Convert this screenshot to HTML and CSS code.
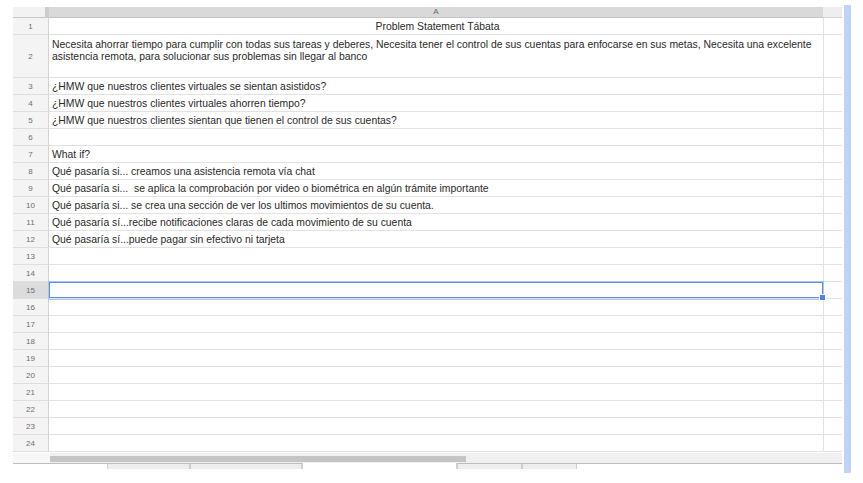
FILE: index.html
```html
<!DOCTYPE html>
<html>
<head>
<meta charset="utf-8">
<link rel="stylesheet" href="styles.css">
</head>
<body>
<div class="page">
  <div class="sheet">
    <div class="row head">
      <div class="corner"></div>
      <div class="colhead">A</div>
      <div class="colhead-rest"></div>
    </div>
    <div class="row"><div class="num">1</div><div class="cell center">Problem Statement Tábata</div><div class="rest"></div></div>
    <div class="row tall"><div class="num">2</div><div class="cell wrap">Necesita ahorrar tiempo para cumplir con todas sus tareas y deberes, Necesita tener el control de sus cuentas para enfocarse en sus metas, Necesita una excelente<br>asistencia remota, para solucionar sus problemas sin llegar al banco</div><div class="rest"></div></div>
    <div class="row"><div class="num">3</div><div class="cell">¿HMW que nuestros clientes virtuales se sientan asistidos?</div><div class="rest"></div></div>
    <div class="row"><div class="num">4</div><div class="cell">¿HMW que nuestros clientes virtuales ahorren tiempo?</div><div class="rest"></div></div>
    <div class="row"><div class="num">5</div><div class="cell">¿HMW que nuestros clientes sientan que tienen el control de sus cuentas?</div><div class="rest"></div></div>
    <div class="row"><div class="num">6</div><div class="cell"></div><div class="rest"></div></div>
    <div class="row"><div class="num">7</div><div class="cell">What if?</div><div class="rest"></div></div>
    <div class="row"><div class="num">8</div><div class="cell">Qué pasaría si... creamos una asistencia remota vía chat</div><div class="rest"></div></div>
    <div class="row"><div class="num">9</div><div class="cell">Qué pasaría si...&nbsp; se aplica la comprobación por video o biométrica en algún trámite importante</div><div class="rest"></div></div>
    <div class="row"><div class="num">10</div><div class="cell">Qué pasaría si... se crea una sección de ver los ultimos movimientos de su cuenta.</div><div class="rest"></div></div>
    <div class="row"><div class="num">11</div><div class="cell">Qué pasaría sí...recibe notificaciones claras de cada movimiento de su cuenta</div><div class="rest"></div></div>
    <div class="row"><div class="num">12</div><div class="cell">Qué pasaría sí...puede pagar sin efectivo ni tarjeta</div><div class="rest"></div></div>
    <div class="row"><div class="num">13</div><div class="cell"></div><div class="rest"></div></div>
    <div class="row"><div class="num">14</div><div class="cell"></div><div class="rest"></div></div>
    <div class="row sel"><div class="num">15</div><div class="cell"><span class="handle"></span></div><div class="rest"></div></div>
    <div class="row"><div class="num">16</div><div class="cell"></div><div class="rest"></div></div>
    <div class="row"><div class="num">17</div><div class="cell"></div><div class="rest"></div></div>
    <div class="row"><div class="num">18</div><div class="cell"></div><div class="rest"></div></div>
    <div class="row"><div class="num">19</div><div class="cell"></div><div class="rest"></div></div>
    <div class="row"><div class="num">20</div><div class="cell"></div><div class="rest"></div></div>
    <div class="row"><div class="num">21</div><div class="cell"></div><div class="rest"></div></div>
    <div class="row"><div class="num">22</div><div class="cell"></div><div class="rest"></div></div>
    <div class="row"><div class="num">23</div><div class="cell"></div><div class="rest"></div></div>
    <div class="row"><div class="num">24</div><div class="cell"></div><div class="rest"></div></div>
    <div class="hscroll">
      <div class="hs-left"></div>
      <div class="hs-track"><div class="thumb"></div></div>
    </div>
    <div class="tabs">
      <div class="tab t1"></div>
      <div class="tab t2"></div>
      <div class="tab active"></div>
      <div class="tab t4"></div>
      <div class="tab t5"></div>
    </div>
  </div>
  <div class="vbar"></div>
</div>
</body>
</html>
```

FILE: styles.css
```css
html, body {
  margin: 0;
  padding: 0;
  background: #ffffff;
}
.page {
  display: flex;
  align-items: flex-start;
  padding: 7px 0 0 13px;
  font-family: "Liberation Sans", Arial, sans-serif;
}
.sheet {
  width: 829px;
  display: flex;
  flex-direction: column;
}
.vbar {
  width: 7px;
  height: 468px;
  margin-left: 2px;
  margin-top: -2px;
  background: #bfd3fa;
}
.row {
  display: grid;
  grid-template-columns: 36px 774px 19px;
  height: 17px;
}
.row.tall {
  height: 43px;
}
.row.head {
  height: 11px;
}
.corner {
  background: #f2f2f2;
  border-right: 4px solid #cdcdcd;
  box-sizing: border-box;
  border-bottom: 1px solid #c8c8c8;
}
.colhead {
  background: #d9d9d9;
  border-bottom: 1px solid #c4c4c4;
  box-sizing: border-box;
  color: #6a6a6a;
  font-size: 8px;
  line-height: 10px;
  text-align: center;
}
.colhead-rest {
  background: #eeeeee;
  border-bottom: 1px solid #d2d2d2;
  box-sizing: border-box;
}
.num {
  background: #f4f4f4;
  border-right: 1px solid #d4d4d4;
  border-bottom: 1px solid #dedede;
  box-sizing: border-box;
  color: #6e6e6e;
  font-size: 8px;
  display: flex;
  align-items: center;
  justify-content: center;
}
.cell {
  position: relative;
  border-bottom: 1px solid #e2e2e2;
  box-sizing: border-box;
  color: #2a2a2a;
  font-size: 10.4px;
  line-height: 12px;
  padding: 3px 0 0 3px;
  white-space: nowrap;
  overflow: hidden;
}
.cell.center {
  text-align: center;
}
.cell.wrap {
  padding-top: 4px;
}
.rest {
  border-left: 1px solid #e2e2e2;
  border-bottom: 1px solid #e2e2e2;
  box-sizing: border-box;
}
.row.sel .num {
  background: #dcdcdc;
}
.row.sel .cell {
  overflow: visible;
  box-shadow: inset 0 0 0 1px #5a90ea, 0 0 0 1px #a9c5f3;
}
.handle {
  position: absolute;
  right: -3px;
  bottom: -3px;
  width: 5px;
  height: 5px;
  background: #4a86e8;
  border: 1px solid #ffffff;
  box-sizing: content-box;
}
.hscroll {
  display: flex;
  height: 10px;
  margin-top: 1px;
}
.hs-left {
  width: 37px;
  background: #f7f7f7;
}
.hs-track {
  flex: 1;
  background: #f0f0f0;
  padding-top: 3px;
  box-sizing: border-box;
}
.thumb {
  width: 416px;
  height: 6px;
  background: #c5c5c5;
}
.tabs {
  display: flex;
  height: 5px;
  border-top: 1px solid #bdbdbd;
  padding-left: 94px;
}
.tab {
  background: #eeeeee;
  border-left: 1px solid #cfcfcf;
  border-right: 1px solid #cfcfcf;
  box-sizing: border-box;
  height: 5px;
}
.t1 { width: 83px; }
.t2 { width: 112px; }
.active {
  width: 155px;
  background: #ffffff;
  margin-top: -1px;
  height: 6px;
}
.t4 { width: 65px; }
.t5 { width: 55px; }
```
